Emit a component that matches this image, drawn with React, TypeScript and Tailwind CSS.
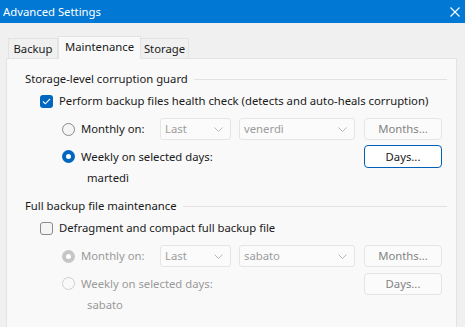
import React from "react";

const font = { fontFamily: '"Noto Sans", "Segoe UI", sans-serif' };

function Chevron() {
  return (
    <svg width="9" height="5" viewBox="0 0 9 5" className="shrink-0">
      <path d="M0.5 0.5 L4.5 4.5 L8.5 0.5" fill="none" stroke="#b8b8b8" strokeWidth="1" />
    </svg>
  );
}

function Dropdown({ value, w }: { value: string; w: string }) {
  return (
    <div className={`${w} h-[22px] rounded-[3px] border border-[#e5e5e5] bg-[#fbfbfb] flex items-center justify-between pl-[4px] pr-[7px] text-[#9b9b9b]`}>
      <span>{value}</span>
      <Chevron />
    </div>
  );
}

function Btn({ label, focused }: { label: string; focused?: boolean }) {
  return (
    <div
      className={
        focused
          ? "w-[78px] h-[23px] rounded-[4px] border border-[#005fb8] bg-white flex items-center justify-center text-[#1a1a1a]"
          : "w-[78px] h-[22px] rounded-[4px] border border-[#e5e5e5] bg-[#fbfbfb] flex items-center justify-center text-[#838383]"
      }
    >
      {label}
    </div>
  );
}

function Radio({ state }: { state: "off" | "on" | "off-dis" | "on-dis" }) {
  if (state === "on")
    return (
      <div className="w-[13px] h-[13px] rounded-full bg-[#0067c0] flex items-center justify-center shrink-0">
        <div className="w-[5px] h-[5px] rounded-full bg-white" />
      </div>
    );
  if (state === "on-dis")
    return (
      <div className="w-[13px] h-[13px] rounded-full bg-[#c6c6c6] flex items-center justify-center shrink-0">
        <div className="w-[5px] h-[5px] rounded-full bg-white" />
      </div>
    );
  if (state === "off-dis")
    return <div className="w-[13px] h-[13px] rounded-full border border-[#cfcfcf] bg-[#f9f9f9] shrink-0" />;
  return <div className="w-[13px] h-[13px] rounded-full border border-[#8a8a8a] bg-[#f5f5f5] shrink-0" />;
}

function Check({ checked }: { checked: boolean }) {
  if (checked)
    return (
      <div className="w-[13px] h-[13px] rounded-[3px] bg-[#0067c0] flex items-center justify-center shrink-0">
        <svg width="9" height="7" viewBox="0 0 9 7">
          <path d="M1 3.5 L3.3 5.8 L8 1" fill="none" stroke="white" strokeWidth="1.1" />
        </svg>
      </div>
    );
  return <div className="w-[13px] h-[13px] rounded-[3px] border border-[#8a8a8a] bg-[#f5f5f5] shrink-0" />;
}

function Heading({ text }: { text: string }) {
  return (
    <div className="flex items-center h-[16px] gap-[6px]">
      <span className="text-[#1a1a1a] whitespace-nowrap">{text}</span>
      <div className="flex-1 h-px bg-[#e2e2e2]" />
    </div>
  );
}

function Group({
  heading,
  check,
  checked,
  monthlyRadio,
  weeklyRadio,
  day,
  daysFocused,
  disabled,
  subday,
}: {
  heading: string;
  check: string;
  checked: boolean;
  monthlyRadio: "off" | "on" | "off-dis" | "on-dis";
  weeklyRadio: "off" | "on" | "off-dis" | "on-dis";
  day: string;
  daysFocused: boolean;
  disabled: boolean;
  subday: string;
}) {
  const txt = disabled ? "text-[#9a9a9a]" : "text-[#1a1a1a]";
  return (
    <div className="flex flex-col">
      <Heading text={heading} />
      <div className="flex items-center h-[16px] ml-[15px] mt-[6px] gap-[6px]">
        <Check checked={checked} />
        <span className="text-[#1a1a1a] whitespace-nowrap">{check}</span>
      </div>
      <div className="ml-[37px] mt-[9px] grid grid-cols-[98px_79px_125px_78px] items-center">
        <div className="flex items-center gap-[6px] h-[22px]">
          <Radio state={monthlyRadio} />
          <span className={txt}>Monthly on:</span>
        </div>
        <Dropdown value="Last" w="w-[71px]" />
        <Dropdown value={day} w="w-[116px]" />
        <Btn label="Months..." />
      </div>
      <div className="ml-[37px] mt-[5px] grid grid-cols-[302px_78px] items-center">
        <div className="flex items-center gap-[6px] h-[23px]">
          <Radio state={weeklyRadio} />
          <span className={txt}>Weekly on selected days:</span>
        </div>
        <Btn label="Days..." focused={daysFocused} />
      </div>
      <div className={`ml-[62px] mt-[2px] h-[16px] flex items-center ${txt}`}>{subday}</div>
    </div>
  );
}

export default function App() {
  return (
    <div className="w-[465px] h-[327px] bg-[#f0f0f0] flex flex-col overflow-hidden text-[11.3px] leading-none" style={font}>
      <div className="h-[23px] bg-[#0078d4] flex items-center justify-between pl-[3px] pr-[5px] shrink-0">
        <span className="text-white">Advanced Settings</span>
        <svg width="10" height="10" viewBox="0 0 10 10">
          <path d="M0.5 0.5 L9.5 9.5 M9.5 0.5 L0.5 9.5" stroke="white" strokeWidth="1.1" />
        </svg>
      </div>
      <div className="flex flex-col flex-1 pt-[13px] pl-[6px] pr-[8px]">
        <div className="flex items-end pl-[2px] h-[22px] relative z-10">
          <div className="w-[50px] h-[20px] border border-b-0 border-[#e3e3e3] bg-[#f0f0f0] flex items-center justify-center text-[#1a1a1a]">
            Backup
          </div>
          <div className="w-[83px] h-[23px] -mb-px border border-b-0 border-[#e3e3e3] bg-[#f9f9f9] flex items-center justify-center pb-[2px] text-[#1a1a1a]">
            Maintenance
          </div>
          <div className="w-[48px] h-[20px] border border-b-0 border-l-0 border-[#e3e3e3] bg-[#f0f0f0] flex items-center justify-center text-[#1a1a1a]">
            Storage
          </div>
        </div>
        <div className="flex-1 border border-b-0 border-[#e3e3e3] bg-[#f9f9f9] pl-[18px] pr-[9px] pt-[12px] flex flex-col">
          <Group
            heading="Storage-level corruption guard"
            check="Perform backup files health check (detects and auto-heals corruption)"
            checked
            monthlyRadio="off"
            weeklyRadio="on"
            day="venerdì"
            daysFocused
            disabled={false}
            subday="martedì"
          />
          <div className="mt-[12px]">
            <Group
              heading="Full backup file maintenance"
              check="Defragment and compact full backup file"
              checked={false}
              monthlyRadio="on-dis"
              weeklyRadio="off-dis"
              day="sabato"
              daysFocused={false}
              disabled
              subday="sabato"
            />
          </div>
        </div>
      </div>
    </div>
  );
}
